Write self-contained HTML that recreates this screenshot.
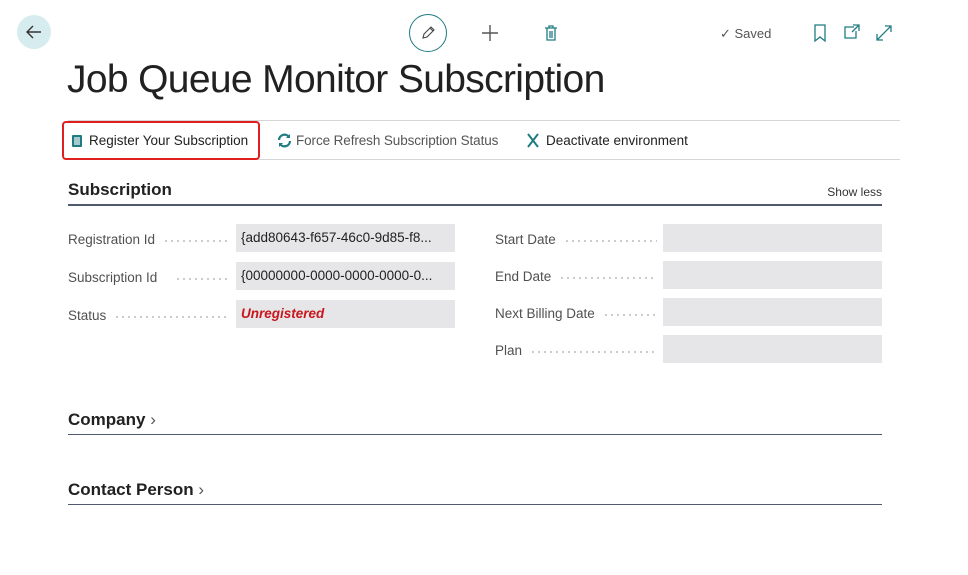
<!DOCTYPE html>
<html><head><style>
*{margin:0;padding:0;box-sizing:border-box}
body{width:968px;height:575px;background:#fff;font-family:"Liberation Sans",sans-serif;color:#212121;position:relative;overflow:hidden}
.a{position:absolute}
.lbl{position:absolute;font-size:13.5px;color:#505050;display:flex;align-items:center;height:28px}
.lbl span.d{flex:1;margin:0 6px 0 8px;height:2px;position:relative;top:2px;background-image:radial-gradient(circle,#bbb 0.8px,transparent 1px);background-size:6px 2px;background-repeat:repeat-x}
.box{position:absolute;background:#e6e6e8;height:28px;font-size:13.5px;line-height:28px;padding-left:5px;color:#212121;white-space:nowrap;overflow:hidden}
.sec{position:absolute;left:68px;width:814px;font-size:17px;font-weight:bold;color:#212121}
</style></head><body>
<div class="a" style="left:17px;top:15px;width:34px;height:34px;border-radius:50%;background:#d7ecee"></div>
<svg class="a" style="left:24px;top:22px" width="20" height="20" viewBox="0 0 20 20"><path d="M17 10H3M9 4L3 10l6 6" stroke="#333" stroke-width="1.4" fill="none"/></svg>
<div class="a" style="left:409px;top:14px;width:38px;height:38px;border-radius:50%;border:1.5px solid #1f7c82"></div>
<svg class="a" style="left:419px;top:24px" width="18" height="18" viewBox="0 0 18 18"><path d="M4 14l1-4 7-7 3 3-7 7z M11 4l3 3" stroke="#444" stroke-width="1.1" fill="none"/></svg>
<svg class="a" style="left:480px;top:23px" width="20" height="20"><path d="M10 2v16M2 10h16" stroke="#555" stroke-width="1.4"/></svg>
<svg class="a" style="left:543px;top:24px" width="16" height="18"><path d="M2 4h12M6 4V2h4v2M4 4v12h8V4M7 7v7M9 7v7" stroke="#1f7c82" stroke-width="1.3" fill="none"/></svg>
<div class="a" style="left:720px;top:26px;font-size:13px;color:#555">✓ Saved</div>
<svg class="a" style="left:813px;top:24px" width="14" height="18"><path d="M2 1h10v16l-5-4-5 4z" stroke="#1f7c82" stroke-width="1.3" fill="none"/></svg>
<svg class="a" style="left:843px;top:24px" width="18" height="16"><path d="M11 3H2v11h11V7M10 1h6v6M16 1l-7 7" stroke="#1f7c82" stroke-width="1.3" fill="none"/></svg>
<svg class="a" style="left:875px;top:24px" width="18" height="18"><path d="M2 16L16 2M10 2h6v6M2 10v6h6" stroke="#1f7c82" stroke-width="1.3" fill="none"/></svg>
<div class="a" style="left:67px;top:58px;font-size:39px;font-weight:300;color:#212121;letter-spacing:-0.65px;white-space:nowrap">Job Queue Monitor Subscription</div>
<div class="a" style="left:68px;top:120px;width:832px;height:1px;background:#d6d6d6"></div>
<div class="a" style="left:68px;top:159px;width:832px;height:1px;background:#d6d6d6"></div>
<div class="a" style="left:62px;top:121px;width:198px;height:39px;border:2px solid #e02020;border-radius:4px"></div>
<svg class="a" style="left:71px;top:134px" width="12" height="14"><rect x="1" y="1" width="10" height="12" rx="1" fill="#1f7c82"/><rect x="3" y="3" width="6" height="8" fill="#fff" opacity=".6"/></svg>
<div class="a" style="left:89px;top:133px;font-size:13.5px">Register Your Subscription</div>
<svg class="a" style="left:277px;top:133px" width="15" height="15" viewBox="0 0 15 15"><path d="M2 7a5.5 5.5 0 0 1 10-3M13 8a5.5 5.5 0 0 1-10 3" stroke="#1f7c82" stroke-width="2.2" fill="none"/><path d="M13 1v4h-4zM2 14v-4h4z" fill="#1f7c82"/></svg>
<div class="a" style="left:296px;top:133px;font-size:13.5px;color:#555;letter-spacing:-0.1px">Force Refresh Subscription Status</div>
<svg class="a" style="left:526px;top:133px" width="14" height="15"><path d="M2 1l10 13M12 1L2 14" stroke="#1f7c82" stroke-width="2"/></svg>
<div class="a" style="left:546px;top:133px;font-size:13.5px">Deactivate environment</div>
<div class="sec" style="top:180px;height:26px;border-bottom:2px solid #505a6e">Subscription</div>
<div class="a" style="right:86px;top:185px;font-size:12px;color:#333">Show less</div>
<div class="lbl" style="left:68px;top:225px;width:168px">Registration Id<span class="d"></span></div>
<div class="box" style="left:236px;top:224px;width:219px">{add80643-f657-46c0-9d85-f8...</div>
<div class="lbl" style="left:68px;top:263px;width:168px">Subscription Id<span class="d" style="margin-left:18px"></span></div>
<div class="box" style="left:236px;top:262px;width:219px">{00000000-0000-0000-0000-0...</div>
<div class="lbl" style="left:68px;top:301px;width:168px">Status<span class="d"></span></div>
<div class="box" style="left:236px;top:300px;width:219px;color:#c8161d;font-weight:bold;font-style:italic">Unregistered</div>
<div class="lbl" style="left:495px;top:225px;width:168px">Start Date<span class="d"></span></div>
<div class="box" style="left:663px;top:224px;width:219px"></div>
<div class="lbl" style="left:495px;top:262px;width:168px">End Date<span class="d"></span></div>
<div class="box" style="left:663px;top:261px;width:219px"></div>
<div class="lbl" style="left:495px;top:299px;width:168px">Next Billing Date<span class="d"></span></div>
<div class="box" style="left:663px;top:298px;width:219px"></div>
<div class="lbl" style="left:495px;top:336px;width:168px">Plan<span class="d"></span></div>
<div class="box" style="left:663px;top:335px;width:219px"></div>
<div class="sec" style="top:410px;height:25px;border-bottom:1px solid #505a6e">Company<span style="font-weight:normal;color:#555"> ›</span></div>
<div class="sec" style="top:480px;height:25px;border-bottom:1px solid #505a6e">Contact Person<span style="font-weight:normal;color:#555"> ›</span></div>
</body></html>
